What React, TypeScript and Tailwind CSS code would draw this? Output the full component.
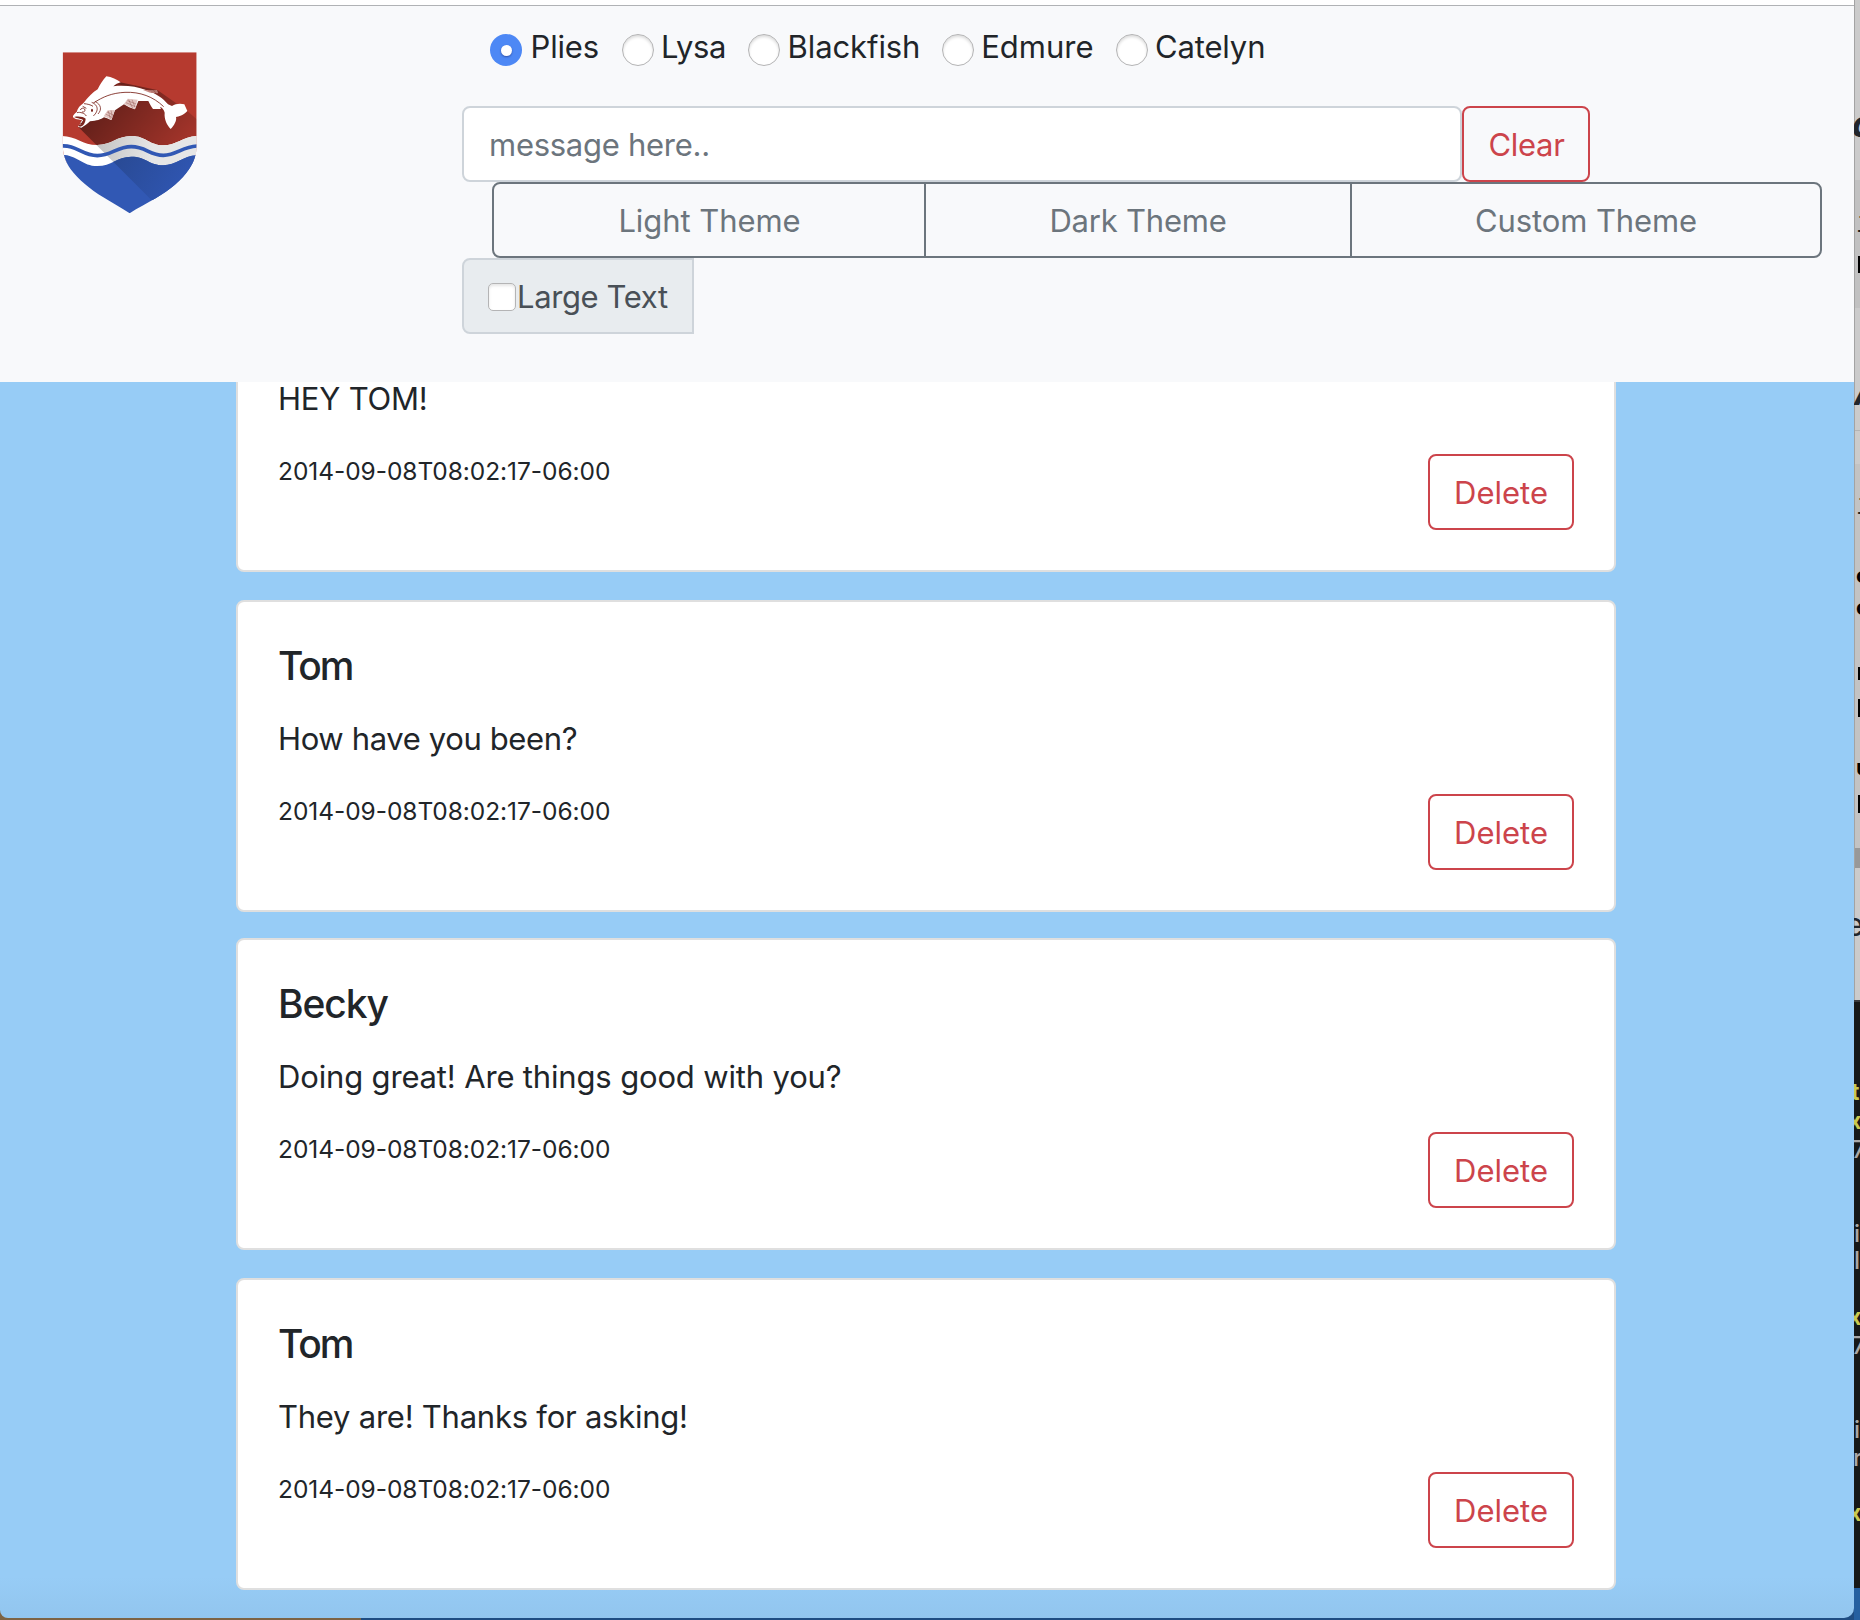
import React from 'react'

const senders = [
  { name: 'Plies', box: 'w-[132px]', text: 'ml-[8.5px] tracking-[-0.15px]' },
  { name: 'Lysa', box: 'w-[126px]', text: 'ml-[7px] tracking-[-0.4px]' },
  { name: 'Blackfish', box: 'w-[194px]', text: 'ml-[7.6px] tracking-[-0.1px]' },
  { name: 'Edmure', box: 'w-[174px]', text: 'ml-[7.2px] tracking-[0px]' },
  { name: 'Catelyn', box: 'w-[160px]', text: 'ml-[7px] tracking-[-0.15px]' },
]

const messages = [
  { from: '', text: 'HEY TOM!', card: '', title: '', body: 'tracking-[-0.2px]' },
  { from: 'Tom', text: 'How have you been?', card: 'mt-7', title: 'tracking-[-2.1px]', body: 'tracking-[-0.37px]' },
  { from: 'Becky', text: 'Doing great! Are things good with you?', card: 'mt-[26px]', title: 'tracking-[-1.1px]', body: 'tracking-[-0.16px]' },
  { from: 'Tom', text: 'They are! Thanks for asking!', card: 'mt-7', title: 'tracking-[-2.1px]', body: 'tracking-[-0.24px]' },
]

/* Pieces of the windows that show past the right edge of the chat window. */
const slivers = [
  { t: 'a', c: 'top-[106px] left-[-2px] text-[36px] font-bold italic text-[#22262c]' },
  { t: 'i', c: 'top-[209px] left-[2px] text-[30px] text-[#222] font-mono' },
  { t: 'A', c: 'top-[376px] left-[0px] text-[34px] font-bold italic text-[#22262c]' },
  { t: 'i', c: 'top-[491px] left-[2px] text-[30px] text-[#222] font-mono' },
  { t: 'c', c: 'top-[564px] left-[2px] text-[22px] font-bold text-black' },
  { t: 'c', c: 'top-[596px] left-[2px] text-[22px] font-bold text-black' },
  { t: 'u', c: 'top-[756px] left-[2px] text-[22px] font-bold text-black' },
  { t: 'e', c: 'top-[909px] left-[-9px] text-[32px] text-[#22262c]' },
  { t: 't', c: 'top-[1081px] left-[-3px] text-[23px] font-bold text-[#c9c94f]' },
  { t: 'x', c: 'top-[1110px] left-[-6px] text-[23px] font-bold text-[#c9c94f]' },
  { t: '7', c: 'top-[1138px] left-[-2px] text-[24px] font-medium text-[#a8a8a8]' },
  { t: 'i', c: 'top-[1222px] left-[0px] text-[24px] font-medium text-[#a8a8a8]' },
  { t: 'l', c: 'top-[1249px] left-[0px] text-[24px] font-medium text-[#a8a8a8]' },
  { t: 'x', c: 'top-[1306px] left-[-6px] text-[23px] font-bold text-[#c9c94f]' },
  { t: '7', c: 'top-[1334px] left-[-2px] text-[24px] font-medium text-[#a8a8a8]' },
  { t: 'i', c: 'top-[1418px] left-[0px] text-[24px] font-medium text-[#a8a8a8]' },
  { t: 'r', c: 'top-[1446px] left-[-1px] text-[24px] font-medium text-[#a8a8a8]' },
  { t: 'x', c: 'top-[1502px] left-[-6px] text-[23px] font-bold text-[#c9c94f]' },
]

const ticks = ['top-[256px] h-[17px]', 'top-[667px] h-[13px]', 'top-[699px] h-[18px]', 'top-[795px] h-[18px]']

function Crest() {
  return (
    <svg className="mt-[46px] ml-[62px] h-[162px] w-[135px] shrink-0" viewBox="66 66 405 486" fill="none">
      <defs>
        <clipPath id="shield">
          <path d="M68 67H470V345C470 372 462 396 447 418C425 451 390 480 347 505C320 520 294 534 269 550C244 534 216 518 190 502C150 478 115 449 92 418C77 396 68 372 68 345Z" />
        </clipPath>
        <linearGradient id="shade" gradientUnits="userSpaceOnUse" x1="170" y1="230" x2="420" y2="440">
          <stop offset="0" stopColor="#000" stopOpacity="0.45" />
          <stop offset="1" stopColor="#000" stopOpacity="0.04" />
        </linearGradient>
        <linearGradient id="grey" gradientUnits="userSpaceOnUse" x1="170" y1="370" x2="330" y2="400">
          <stop offset="0" stopColor="#c4c4c4" />
          <stop offset="1" stopColor="#e6e6e6" />
        </linearGradient>
        <linearGradient id="deep" gradientUnits="userSpaceOnUse" x1="220" y1="390" x2="400" y2="500">
          <stop offset="0" stopColor="#294a94" />
          <stop offset="1" stopColor="#2f55b0" />
        </linearGradient>
        <clipPath id="cast">
          <path d="M116 292L335 511L480 511V270L442 243L350 180L240 160Z" />
        </clipPath>
      </defs>
      <g clipPath="url(#shield)">
        <path d="M60 60H480V400H60Z" fill="#b63a2f" />
        <path d="M116 292L250 426H480V276L442 243L352 180L236 156L150 220Z" fill="url(#shade)" />
        <path d="M60 318C105 315 125 345 172 345C215 345 230 318 274 318C318 318 328 346 370 346C412 346 430 316 480 318V560H60Z" fill="#fff" />
        <path d="M60 318C105 315 125 345 172 345C215 345 230 318 274 318C318 318 328 346 370 346C412 346 430 316 480 318V560H60Z" fill="url(#grey)" clipPath="url(#cast)" />
        <path d="M60 348C110 343 125 377 172 377C215 377 230 350 274 350C318 350 328 376 370 376C412 376 430 346 480 348" stroke="#3158b4" strokeWidth="11" />
        <path d="M60 374C110 372 125 408 172 408C215 408 230 380 274 380C318 380 328 406 370 406C412 406 430 374 480 376V560H60Z" fill="#3158b4" />
        <path d="M60 374C110 372 125 408 172 408C215 408 230 380 274 380C318 380 328 406 370 406C412 406 430 374 480 376V560H60Z" fill="url(#deep)" clipPath="url(#cast)" />
      </g>
      <path d="M222 166L234 158L249 169Z" fill="#7b251d" />
      <path
        d="M173 178C180 164 188 150 199 139C215 141 231 148 242 157C234 159 226 163 220 169C255 165 290 170 318 180C348 190 370 205 384 223L396 228C406 221 421 219 433 223L442 243C430 256 416 260 408 261C411 272 402 287 392 297C381 285 372 268 374 248C372 239 368 234 360 230L363 237H339C333 229 329 221 325 213L295 213L285 238C273 235 262 230 252 223C243 229 234 235 225 241L214 270C205 267 197 263 192 262C183 268 170 273 150 274C143 281 133 288 124 293L114 290L118 284C125 284 131 281 133 276C128 270 121 265 115 266C111 270 106 267 99 262C97 257 104 251 110 246C113 234 121 226 130 220C145 201 158 186 173 178Z"
        fill="#fff"
      />
      <path d="M252 222L263 206L293 209L284 238ZM191 259L203 241L224 240L215 269Z" fill="#e2c5c1" />
      <path d="M258 218L286 230M262 212L289 222M266 209L278 235M276 209L285 231M197 252L217 263M201 246L220 255M205 243L211 266M213 241L217 260" stroke="#85453e" strokeWidth="1.2" />
      <path d="M309 180L351 180L354 190L330 188Z" fill="#c98d86" />
      <path d="M325 182H350M333 186H352M340 180L350 192" stroke="#85453e" strokeWidth="1.5" />
      <path d="M160 219C190 200 215 189 255 187C300 185 340 200 371 230" stroke="#7b251d" strokeWidth="2.6" />
      <path d="M155 217C174 224 178 242 160 258M165 214C184 224 186 239 174 252" stroke="#7b251d" strokeWidth="2.4" />
      <path d="M132 221C142 222 152 224 159 229M128 229L139 235M121 240C123 234 130 233 134 237C137 243 132 247 126 246M111 248C120 245 135 250 139 258" stroke="#7b251d" strokeWidth="2.6" />
      <ellipse cx="156" cy="241" rx="3" ry="5" fill="#7b251d" />
      <path d="M102 261C115 258 130 260 137 266C136 279 130 289 119 290L115 285C124 286 129 279 126 272C120 266 109 265 102 261Z" fill="#7b251d" />
      <path d="M112 266L128 270L122 280" stroke="#fff" strokeWidth="3" />
    </svg>
  )
}

export default function App() {
  return (
    <div className="flex h-[1620px] w-[1860px] overflow-hidden bg-[#215287] font-['Inter',sans-serif] text-[31px] leading-[48px] text-[#212529]">
      <div className="flex h-full w-[1854px] shrink-0 flex-col bg-[linear-gradient(90deg,#7d6343_361px,#1f4d82_361px)]">
        <div className="flex h-[1618px] flex-col overflow-hidden rounded-bl-lg rounded-br-[10px] bg-[#97ccf6]">
          <div className="h-[5px] shrink-0 bg-white" />
          <header className="flex h-[377px] shrink-0 border-t border-[#b0b2b5] bg-[#f8f9fb]">
            <Crest />
            <div className="ml-[265px] flex flex-col pt-[17px]">
              <div className="ml-7 flex h-12">
                {senders.map((s, i) => (
                  <label key={s.name} className={`flex shrink-0 ${s.box}`}>
                    {i === 0 ? (
                      <span className="mt-[11px] flex size-8 shrink-0 items-center justify-center rounded-full bg-[#4d88f5]">
                        <span className="size-[11px] rounded-full bg-white shadow-[0_1px_2px_rgba(0,0,60,0.4)]" />
                      </span>
                    ) : (
                      <span className="mt-[11px] size-8 shrink-0 rounded-full border border-[#b4b4b5] bg-white shadow-[inset_0_2px_3px_rgba(0,0,0,0.14)]" />
                    )}
                    <span className={s.text}>{s.name}</span>
                  </label>
                ))}
              </div>
              <div className="mt-[35px] flex">
                <div className="flex h-[76px] w-[1000px] items-center rounded-lg border-2 border-[#ced4da] bg-white pt-0.5 pl-[25px] tracking-[-0.27px] text-[#6c757d]">
                  message here..
                </div>
                <button className="h-[76px] w-32 rounded-lg border-2 border-[#cc444b] pt-0.5 pl-px tracking-[-0.3px] text-[#cc444b]">Clear</button>
              </div>
              <div className="ml-[30px] flex h-[76px] w-[1330px] divide-x-2 divide-[#6c757d] rounded-lg border-2 border-[#6c757d] text-[#6c757d]">
                <button className="w-[432px] pt-0.5 pl-px tracking-[-0.06px]">Light Theme</button>
                <button className="w-[426px] pt-0.5 tracking-[-0.22px]">Dark Theme</button>
                <button className="flex-1 pt-0.5 tracking-[-0.12px]">Custom Theme</button>
              </div>
              <label className="flex h-[76px] w-[232px] items-center rounded-l-lg border-2 border-[#ced4da] bg-[#e8ecef] pt-0.5 pl-6 text-[#495057]">
                <span className="size-7 shrink-0 rounded-[5px] border border-[#b4b4b5] bg-white shadow-[inset_0_2px_3px_rgba(0,0,0,0.1)]" />
                <span className="ml-px whitespace-nowrap tracking-[-0.38px]">Large Text</span>
              </label>
            </div>
          </header>
          <main className="flex min-h-0 flex-1 flex-col overflow-hidden bg-[linear-gradient(180deg,transparent_1195px,rgba(110,150,180,0.12))] pl-[236px]">
            <div className="-mt-[122px] flex flex-col">
              {messages.map((m, i) => (
                <article key={i} className={`flex h-[312px] w-[1380px] shrink-0 flex-col rounded-lg border-2 border-[#dfdfdf] bg-white p-10 ${m.card}`}>
                  <h5 className={`h-12 text-[39px] leading-[48px] font-[550] ${m.title}`}>{m.from}</h5>
                  <p className={`mt-[25px] ${m.body}`}>{m.text}</p>
                  <div className="mt-6 flex justify-between">
                    <span className="text-[24.5px] leading-[48px] tracking-[-0.06px]">2014-09-08T08:02:17-06:00</span>
                    <button className="mt-[7px] h-[76px] w-[146px] rounded-lg border-2 border-[#cc444b] pt-0.5 text-[#cc444b]">Delete</button>
                  </div>
                </article>
              ))}
            </div>
          </main>
        </div>
      </div>
      <aside className="relative flex w-[6px] shrink-0 flex-col overflow-hidden leading-none">
        <div className="h-[180px] bg-[#cbcbcb]" />
        <div className="h-32 bg-[#c1c1c1]" />
        <div className="h-[122px] bg-[#cbcbcb]" />
        <div className="h-[34px] border-t border-[#b4b4b4] bg-[#cbcbcb]" />
        <div className="h-[384px] bg-[#c3c3c3]" />
        <div className="h-5 bg-[#989898]" />
        <div className="h-[132px] bg-[#cbcbcb]" />
        <div className="h-[588px] border-t-2 border-[#3a3c3e] bg-[#161818]" />
        <div className="flex-1 bg-[#2560a0]" />
        <div className="absolute top-0 left-0 h-[1000px] w-px bg-[#a3a3a3]" />
        {ticks.map((c) => (
          <div key={c} className={`absolute left-1 w-0.5 bg-black ${c}`} />
        ))}
        {slivers.map((s, i) => (
          <span key={i} className={`absolute ${s.c}`}>{s.t}</span>
        ))}
      </aside>
    </div>
  )
}
